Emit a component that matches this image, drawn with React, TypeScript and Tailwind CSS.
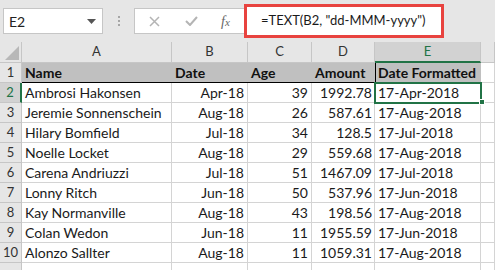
import React from "react";

const ROWS = [
  ["Ambrosi Hakonsen", "Apr-18", "39", "1992.78", "17-Apr-2018"],
  ["Jeremie Sonnenschein", "Aug-18", "26", "587.61", "17-Aug-2018"],
  ["Hilary Bomfield", "Jul-18", "34", "128.5", "17-Jul-2018"],
  ["Noelle Locket", "Aug-18", "29", "559.68", "17-Aug-2018"],
  ["Carena Andriuzzi", "Jul-18", "51", "1467.09", "17-Jul-2018"],
  ["Lonny Ritch", "Jun-18", "50", "537.96", "17-Jun-2018"],
  ["Kay Normanville", "Aug-18", "43", "198.56", "17-Aug-2018"],
  ["Colan Wedon", "Jun-18", "11", "1955.59", "17-Jun-2018"],
  ["Alonzo Sallter", "Aug-18", "11", "1059.31", "17-Aug-2018"],
];

const COLS = "grid grid-cols-[22px_150px_76px_64px_63px_106px_1fr]";
const cell = "h-[20px] border-r border-b border-[#d4d4d4] bg-white text-[14px] leading-[20px] text-[#1a1a1a] whitespace-nowrap overflow-hidden";

function FormulaBar() {
  return (
    <div className="h-[42px] flex items-center bg-[#e6e6e6] relative">
      <div className="ml-[3px] w-[100px] h-[26px] bg-white border border-[#c6c6c6] flex items-center justify-between pl-[5px] pr-[6px] text-[14px] text-[#222]">
        <span>E2</span>
        <svg width="9" height="5" viewBox="0 0 9 5">
          <path d="M0 0h9L4.5 5z" fill="#555" />
        </svg>
      </div>
      <div className="w-[31px] flex flex-col items-center gap-[2px]">
        <span className="w-[2px] h-[2px] bg-[#a6a6a6]" />
        <span className="w-[2px] h-[2px] bg-[#a6a6a6]" />
        <span className="w-[2px] h-[2px] bg-[#a6a6a6]" />
      </div>
      <div className="w-[110px] h-[26px] bg-white border border-r-0 border-[#c6c6c6] flex items-center">
        <svg className="ml-[14px]" width="11" height="11" viewBox="0 0 11 11">
          <path d="M1 1l9 9M10 1l-9 9" stroke="#b4b4b4" strokeWidth="1.5" />
        </svg>
        <svg className="ml-[25px]" width="13" height="10" viewBox="0 0 13 10">
          <path d="M1 5l4 4 7-8" stroke="#b4b4b4" strokeWidth="2" fill="none" />
        </svg>
        <span className="ml-[23px] italic text-[14px] text-[#666] font-['Liberation_Serif',serif]">
          f<span className="text-[11px]">x</span>
        </span>
      </div>
      <div className="w-[200px] h-[34px] border-[3px] border-[#e8433f] bg-white flex items-center pl-[14px] text-[13px] text-[#1a1a1a] whitespace-nowrap">
        =TEXT(B2, "dd-MMM-yyyy")
      </div>
    </div>
  );
}

function ColumnHeaders() {
  const letters = ["A", "B", "C", "D", "E", ""];
  return (
    <div className={COLS}>
      <div className="h-[21px] bg-[#e6e6e6] border-r border-b border-[#c6c6c6] flex items-end justify-end">
        <svg width="14" height="14" viewBox="0 0 14 14" className="mr-[2px] mb-[2px]">
          <path d="M14 0v14H0z" fill="#b8b8b8" />
        </svg>
      </div>
      {letters.map((l) =>
        l === "E" ? (
          <div key={l} className="h-[21px] bg-[#d2d2d2] border-r border-[#c6c6c6] border-b-2 border-b-[#217346] flex items-center justify-center text-[13px] text-[#217346]">
            {l}
          </div>
        ) : (
          <div key={l || "f"} className="h-[21px] bg-[#e6e6e6] border-r border-b border-[#c6c6c6] flex items-center justify-center text-[13px] text-[#333]">
            {l}
          </div>
        )
      )}
    </div>
  );
}

function RowNum({ n, active }: { n?: number; active?: boolean }) {
  return active ? (
    <div className="h-[20px] bg-[#d2d2d2] border-b border-[#c6c6c6] border-r-2 border-r-[#217346] flex items-center justify-center text-[13px] text-[#217346]">
      {n}
    </div>
  ) : (
    <div className="h-[20px] bg-[#e6e6e6] border-r border-b border-[#c6c6c6] flex items-center justify-center text-[13px] text-[#333]">
      {n}
    </div>
  );
}

export default function App() {
  return (
    <div className="w-[495px] h-[270px] overflow-hidden bg-white font-['Lato','Liberation_Sans',sans-serif]">
      <FormulaBar />
      <ColumnHeaders />
      <div className={COLS}>
        <RowNum n={1} />
        {["Name", "Date", "Age", "Amount"].map((h) => (
          <div key={h} className="h-[20px] bg-[#c0c0c0] border-b border-black pl-[3px] text-[14px] leading-[20px] font-bold text-[#111]">
            {h}
          </div>
        ))}
        <div className="h-[20px] bg-[#c0c0c0] border-b border-l border-black pl-[2px] text-[14px] leading-[20px] font-bold text-[#111] whitespace-nowrap">
          Date Formatted
        </div>
        <div className={cell} />
      </div>
      {ROWS.map((r, i) => (
        <div key={r[0]} className={COLS}>
          <RowNum n={i + 2} active={i === 0} />
          <div className={`${cell} pl-[3px]`}>{r[0]}</div>
          <div className={`${cell} text-right pr-[3px]`}>{r[1]}</div>
          <div className={`${cell} text-right pr-[3px]`}>{r[2]}</div>
          <div className={`${cell} text-right pr-[2px]`}>{r[3]}</div>
          {i === 0 ? (
            <div className="relative h-[20px] border-b border-[#d4d4d4] bg-white">
              <div className="absolute -left-[1px] -top-[1px] w-[108px] h-[22px] border-2 border-[#217346] pl-[2px] text-[14px] leading-[18px] text-[#1a1a1a] whitespace-nowrap">
                17-Apr-2018
              </div>
              <div className="absolute -right-[4px] bottom-[-3px] w-[6px] h-[6px] bg-[#217346] border border-white" />
            </div>
          ) : (
            <div className={`${cell} pl-[3px]`}>{r[4]}</div>
          )}
          <div className={cell} />
        </div>
      ))}
      <div className={COLS}>
        <RowNum />
        {[0, 1, 2, 3, 4, 5].map((k) => (
          <div key={k} className={cell} />
        ))}
      </div>
    </div>
  );
}
